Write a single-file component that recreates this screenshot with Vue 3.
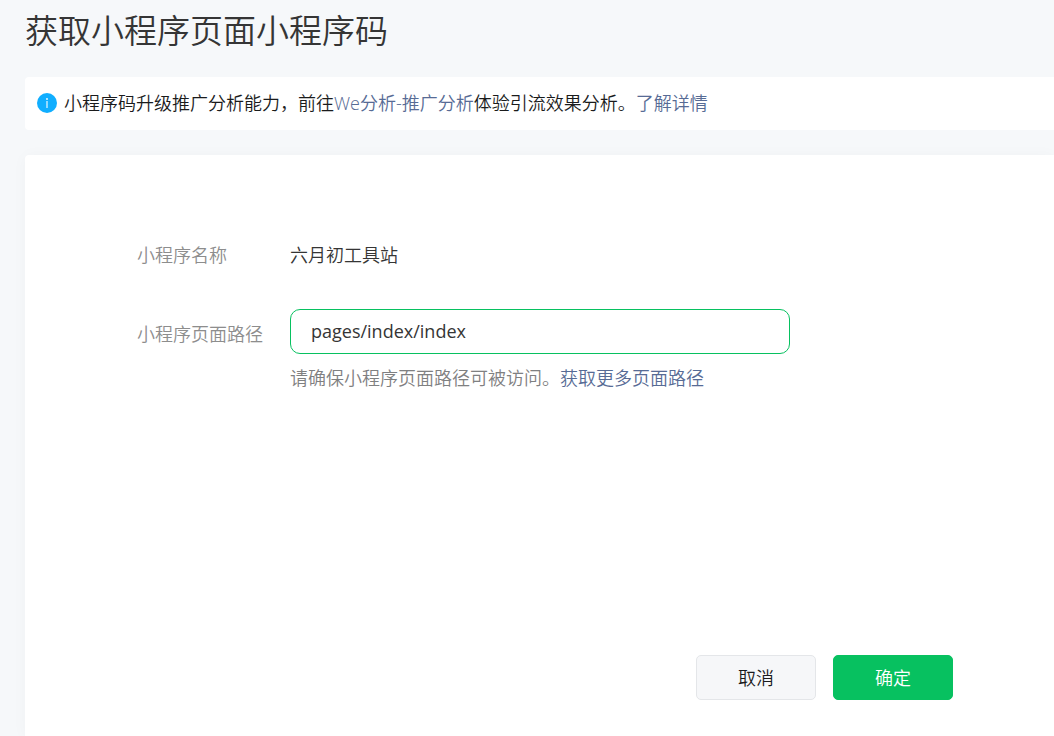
<script setup>
import { ref } from 'vue'

const appName = '六月初工具站'
const path = ref('pages/index/index')
</script>

<template>
  <main class="page">
    <h1 class="title">获取小程序页面小程序码</h1>

    <div class="notice">
      <svg class="notice-icon" viewBox="0 0 20 20" aria-hidden="true">
        <circle cx="10" cy="10" r="10" fill="#10aeff" />
        <circle cx="10" cy="6" r="0.9" fill="#fff" />
        <path d="M10 8V15" stroke="#fff" stroke-width="1.1" />
      </svg>
      <p class="notice-text">
        小程序码升级推广分析能力，前往<a href="#">We分析-推广分析</a>体验引流效果分析。<a href="#">了解详情</a>
      </p>
    </div>

    <form class="panel" @submit.prevent>
      <div class="fields">
        <span class="label">小程序名称</span>
        <span class="value">{{ appName }}</span>

        <label class="label path-label" for="path">小程序页面路径</label>
        <div class="path-field">
          <input id="path" v-model="path" class="input" type="text" />
          <p class="hint">请确保小程序页面路径可被访问。<a href="#">获取更多页面路径</a></p>
        </div>
      </div>

      <div class="actions">
        <button class="button" type="button">取消</button>
        <button class="button primary" type="submit">确定</button>
      </div>
    </form>
  </main>
</template>

<style>
body {
  background: #f6f8fa;
}
</style>

<style scoped>
.page {
  box-sizing: border-box;
  display: flex;
  flex-direction: column;
  min-height: 100vh;
  padding-left: 25px;
  font-family: "Open Sans", "Noto Sans CJK SC", sans-serif;
  font-size: 18px;
  font-weight: 350;
  line-height: 28px;
  color: #353535;
}

.title {
  margin: 7px 0 22px;
  font-size: 33px;
  font-weight: 350;
  line-height: 48px;
}

.notice {
  display: flex;
  align-items: center;
  gap: 7px;
  padding: 12px 12px 13px;
  margin-bottom: 25px;
  border-radius: 4px 0 0 4px;
  background: #fff;
  color: #1a1b1c;
}

.notice-icon {
  flex: none;
  width: 20px;
  height: 20px;
}

.notice-text,
.hint {
  margin: 0;
}

a {
  color: #576b95;
  text-decoration: none;
}

.panel {
  flex: 1;
  display: flex;
  flex-direction: column;
  justify-content: space-between;
  padding: 86px 101px 36px 112px;
  border-radius: 4px 0 0 0;
  background: #fff;
  box-shadow: 0 1px 16px rgba(0, 0, 0, 0.03);
}

.fields {
  display: grid;
  grid-template-columns: 127px minmax(0, 500px);
  column-gap: 26px;
  row-gap: 40px;
}

.label {
  color: #8d8d8d;
  white-space: nowrap;
}

.path-label {
  padding-top: 11px;
}

.input {
  box-sizing: border-box;
  display: block;
  width: 100%;
  height: 45px;
  padding: 0 20px 2px;
  border: 1px solid #07c160;
  border-radius: 10px;
  outline: none;
  background: #fff;
  color: #353535;
  font: inherit;
  font-weight: 400;
}

.hint {
  margin-top: 10px;
  color: #7f8081;
}

.actions {
  display: flex;
  justify-content: flex-end;
  gap: 17px;
}

.button {
  box-sizing: border-box;
  width: 120px;
  height: 45px;
  padding: 0;
  border: 1px solid #e4e6e9;
  border-radius: 5px;
  background: #f6f7f9;
  color: #1a1b1c;
  font: inherit;
}

.primary {
  border-color: #07c160;
  background: #07c160;
  color: #fff;
}
</style>
